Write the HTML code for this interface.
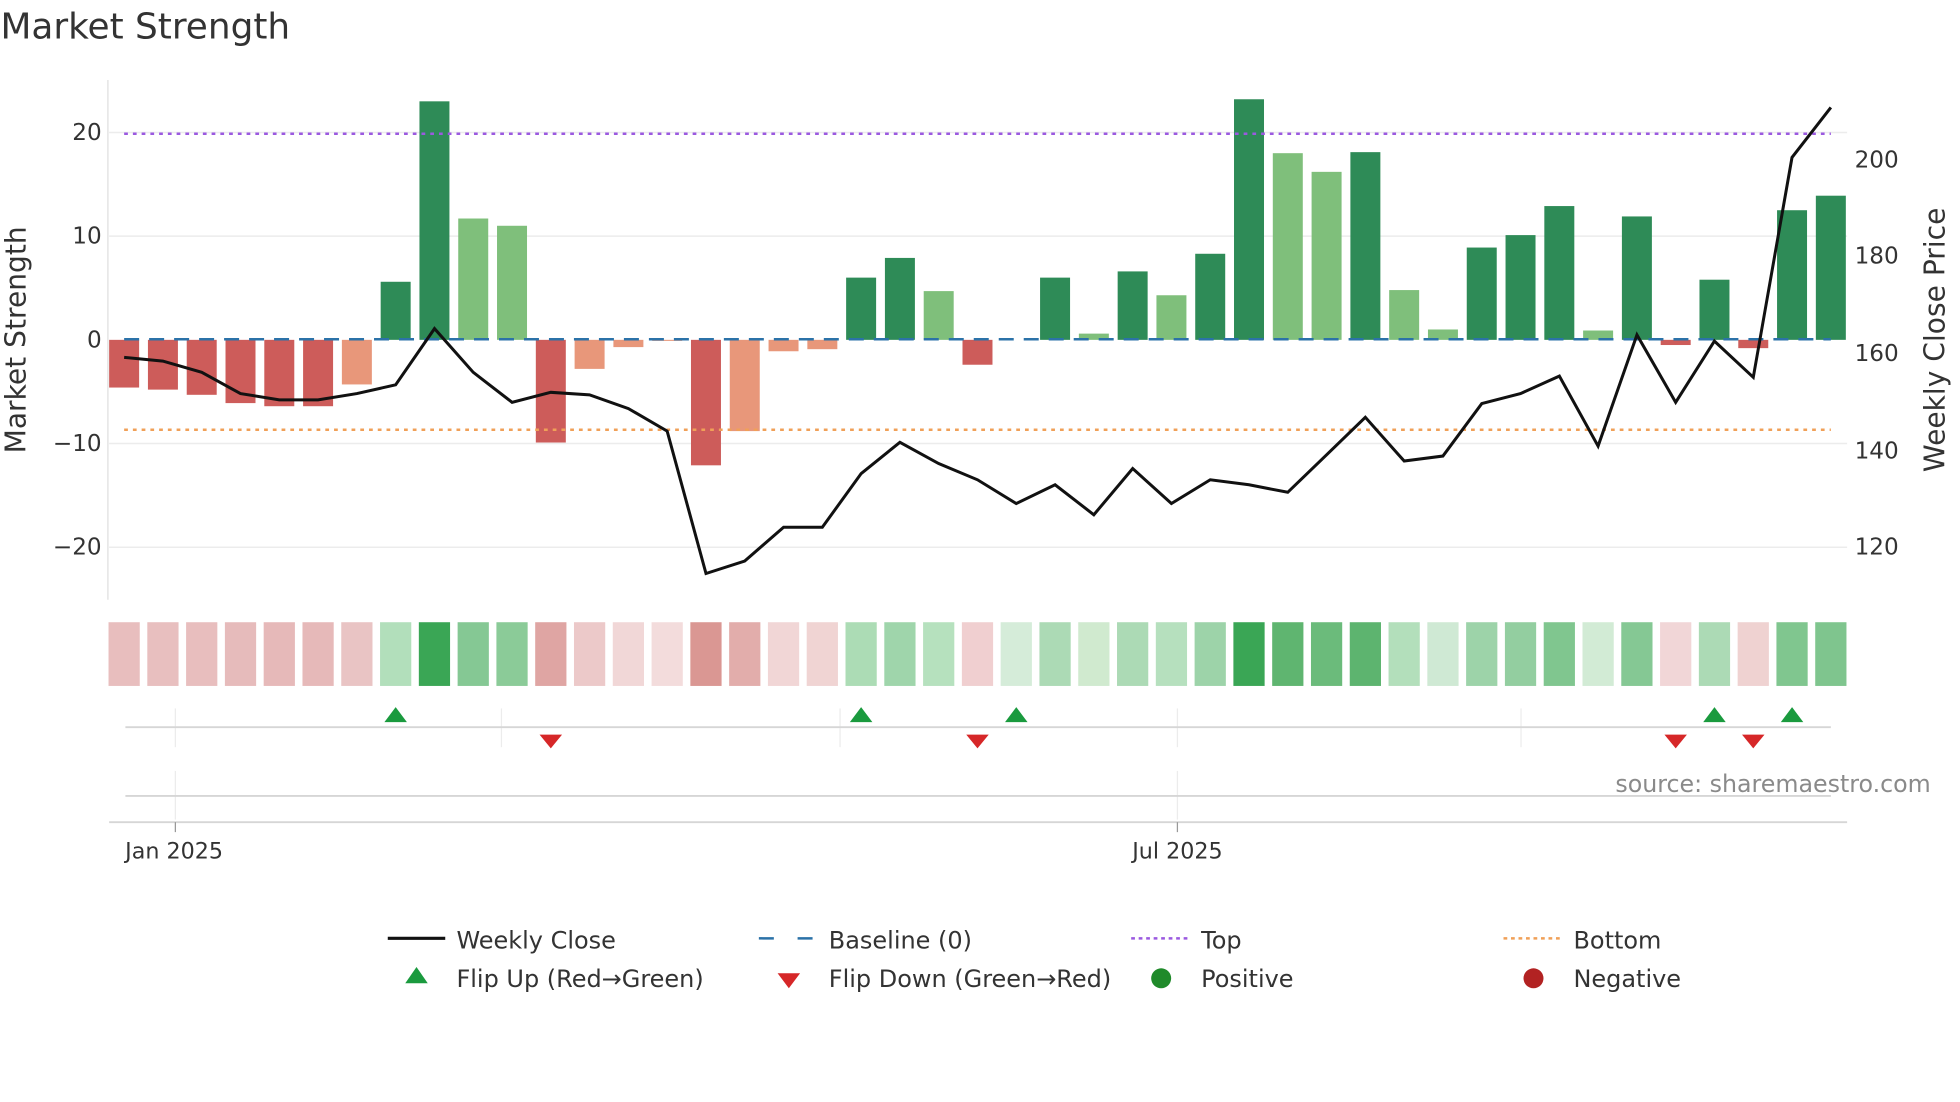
<!DOCTYPE html>
<html><head><meta charset="utf-8"><style>
html,body{margin:0;padding:0;background:#fff;width:1960px;height:1102px;overflow:hidden}
svg{display:block}
text{font-family:"DejaVu Sans","Liberation Sans",sans-serif;fill:#333}
</style></head><body>
<svg id="s" width="1960" height="1102" viewBox="0 0 1568 882" xmlns="http://www.w3.org/2000/svg">
<text x="0" y="31" font-size="28.7">Market Strength</text>
<g id="grid" stroke="#ececec" stroke-width="1.2">
<line x1="87" y1="106" x2="1478" y2="106"/><line x1="87" y1="189" x2="1478" y2="189"/>
<line x1="87" y1="355" x2="1478" y2="355"/><line x1="87" y1="438" x2="1478" y2="438"/>
</g>
<line x1="86" y1="64" x2="86" y2="480" stroke="#e4e4e4" stroke-width="1.2"/>
<g font-size="18.5" text-anchor="end">
<text x="81" y="112">20</text><text x="81" y="195">10</text><text x="81" y="278">0</text>
<text x="81" y="361">−10</text><text x="81" y="444">−20</text>
</g>
<g font-size="18.5">
<text x="1484" y="134">200</text><text x="1484" y="211">180</text><text x="1484" y="289">160</text>
<text x="1484" y="367">140</text><text x="1484" y="444">120</text>
</g>
<text transform="translate(20,272) rotate(-90)" font-size="22.5" text-anchor="middle">Market Strength</text>
<text transform="translate(1556,272) rotate(-90)" font-size="22.5" text-anchor="middle">Weekly Close Price</text>
<g id="bars"></g>
<line x1="99" y1="107" x2="1465" y2="107" stroke="#9b59e0" stroke-width="2" stroke-dasharray="3,4"/>
<line x1="99" y1="344" x2="1465" y2="344" stroke="#f0a058" stroke-width="2" stroke-dasharray="3,4"/>
<line x1="99" y1="271.5" x2="1465" y2="271.5" stroke="#2b72a8" stroke-width="2" stroke-dasharray="12,8"/>
<polyline id="pl" fill="none" stroke="#111" stroke-width="2.4" stroke-linejoin="miter"/>
<g id="heat"></g>
<g stroke="#ececec" stroke-width="1">
<line x1="140" y1="567" x2="140" y2="598"/><line x1="401" y1="567" x2="401" y2="598"/>
<line x1="672" y1="567" x2="672" y2="598"/><line x1="942" y1="567" x2="942" y2="598"/>
<line x1="1217" y1="567" x2="1217" y2="598"/>
<line x1="140" y1="617" x2="140" y2="656"/><line x1="942" y1="617" x2="942" y2="656"/>
</g>
<line x1="100" y1="582" x2="1465" y2="582" stroke="#d6d6d6" stroke-width="1.5"/>
<line x1="100" y1="637" x2="1465" y2="637" stroke="#d6d6d6" stroke-width="1.5"/>
<line x1="87" y1="658" x2="1478" y2="658" stroke="#d6d6d6" stroke-width="1.5"/>
<line x1="140" y1="658" x2="140" y2="666" stroke="#999"/><line x1="942" y1="658" x2="942" y2="666" stroke="#999"/>
<g id="flips"></g>
<text x="1545" y="634" font-size="19" text-anchor="end" style="fill:#8a8a8a">source: sharemaestro.com</text>
<g font-size="17.8" text-anchor="middle"><text x="139" y="687">Jan 2025</text><text x="942" y="687">Jul 2025</text></g>
<g font-size="19.2">
<line x1="310" y1="751" x2="356" y2="751" stroke="#111" stroke-width="2.5"/>
<text x="365" y="759">Weekly Close</text>
<line x1="607" y1="751" x2="652" y2="751" stroke="#2b72a8" stroke-width="2" stroke-dasharray="12,19"/>
<text x="663" y="759">Baseline (0)</text>
<line x1="905" y1="751" x2="950" y2="751" stroke="#9b59e0" stroke-width="2" stroke-dasharray="3,3"/>
<text x="961" y="759">Top</text>
<line x1="1203" y1="751" x2="1248" y2="751" stroke="#f0a058" stroke-width="2" stroke-dasharray="3,3"/>
<text x="1259" y="759">Bottom</text>
<polygon points="333,774 324,787 342,787" fill="#1a9a3e"/>
<text x="365" y="790">Flip Up (Red→Green)</text>
<polygon points="622,779 640,779 631,791" fill="#d62728"/>
<text x="663" y="790">Flip Down (Green→Red)</text>
<circle cx="929" cy="783" r="8" fill="#1f8a2a"/>
<text x="961" y="790">Positive</text>
<circle cx="1227" cy="783" r="8" fill="#b22222"/>
<text x="1259" y="790">Negative</text>
</g>
</svg>
<script>
var NS="http://www.w3.org/2000/svg";
function el(t,a,p){var e=document.createElementNS(NS,t);for(var k in a)e.setAttribute(k,a[k]);document.getElementById(p).appendChild(e);return e;}
var R="#cd5c5a",S="#e8977a",D="#2e8b57",L="#7fbf7b";
var v=[[-4.6,R],[-4.8,R],[-5.3,R],[-6.1,R],[-6.4,R],[-6.4,R],[-4.3,S],[5.6,D],[23,D],[11.7,L],[11.0,L],[-9.9,R],[-2.8,S],[-0.7,S],[-0.1,S],[-12.1,R],[-8.8,S],[-1.1,S],[-0.9,S],[6.0,D],[7.9,D],[4.7,L],[-2.4,R],[0,D],[6.0,D],[0.6,L],[6.6,D],[4.3,L],[8.3,D],[23.2,D],[18.0,L],[16.2,L],[18.1,D],[4.8,L],[1.0,L],[8.9,D],[10.1,D],[12.9,D],[0.9,L],[11.9,D],[-0.5,R],[5.8,D],[-0.8,R],[12.5,D],[13.9,D]];
var py=[286,289,298,315,320,320,315,308,263,298,322,314,316,327,345,459,449,422,422,379,354,371,384,403,388,412,375,403,384,388,394,364,334,369,365,323,315,301,357,268,322,273,302,126,86];
var hc=["#e8bebe","#e8bfbf","#e8bebe","#e6bbbb","#e6b9b9","#e6b9b9","#e9c4c4","#b2dfbb","#3aa655","#85c894","#8bcb98","#dfa5a3","#ecc9c9","#f1d7d7","#f3dcdc","#da9793","#e2adab","#f1d6d6","#f0d4d3","#acdcb5","#9fd5ab","#b6e1be","#f0cfd0","#d5ecd9","#acdab5","#d0eacf","#acdab5","#b6e0be","#9dd3a9","#3aa655","#5fb570","#6bbb7b","#5db46f","#b3dfbb","#cfe9d4","#9dd3a9","#93cea0","#80c68f","#d2ebd5","#85c894","#f1d6d7","#acdab5","#efd2d1","#80c68f","#7fc58e"];
var pts=[];
for(var i=0;i<45;i++){var cx=99+i*31.045;var h=v[i][0]*8.3;
 if(Math.abs(h)>0.3)el("rect",{x:cx-12,y:h>0?272-h:272,width:24,height:Math.abs(h),fill:v[i][1]},"bars");
 el("rect",{x:cx-12.5,y:498,width:25,height:51,fill:hc[i]},"heat");
 pts.push(cx.toFixed(1)+","+py[i]);}
document.getElementById("pl").setAttribute("points",pts.join(" "));
[7,19,23,41,43].forEach(function(i){var x=99+i*31.045;el("polygon",{points:x+",566 "+(x-9)+",578 "+(x+9)+",578",fill:"#1a9a3e"},"flips");});
[11,22,40,42].forEach(function(i){var x=99+i*31.045;el("polygon",{points:(x-9)+",588 "+(x+9)+",588 "+x+",599",fill:"#d62728"},"flips");});
</script>
</body></html>
